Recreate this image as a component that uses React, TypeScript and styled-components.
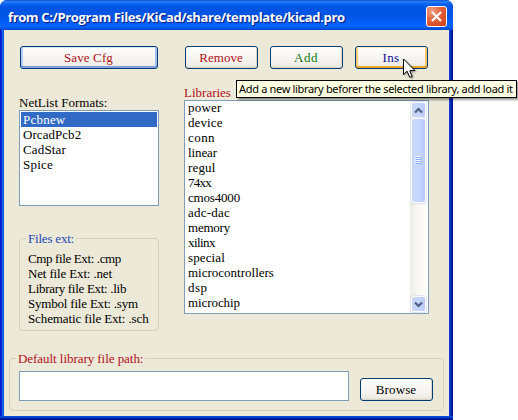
import React from "react";
import styled, { createGlobalStyle } from "styled-components";

const GlobalStyle = createGlobalStyle`
  * { box-sizing: border-box; }
  html, body { margin: 0; padding: 0; background: #fff; }
  body { width: 518px; height: 420px; overflow: hidden; }
`;

const Window = styled.div`
  position: relative;
  display: flex;
  flex-direction: column;
  width: 453px;
  height: 420px;
  border-radius: 7px 7px 0 0;
  background: linear-gradient(90deg, #0019cf 0 1px, #0831d9 1px 2px, #166aee 2px 3px, #0855dd 3px 50%, #0a3fd0 50% calc(100% - 3px), #0831d0 calc(100% - 3px) calc(100% - 2px), #001ea0 calc(100% - 2px) calc(100% - 1px), #00138c calc(100% - 1px));
  font: 13px/15px "Liberation Serif", serif;
  color: #000;
  white-space: pre;
`;

const TitleBar = styled.header`
  display: flex;
  align-items: center;
  justify-content: space-between;
  height: 30px;
  flex: none;
  padding: 3px 6px 0 8px;
  border-radius: 7px 7px 0 0;
  background: linear-gradient(180deg, #0a50cf 0, #2b80f5 6%, #0a62ee 13%, #0054e3 25%, #0055e5 55%, #0261fb 78%, #0264ff 88%, #0257e6 94%, #0041c2 100%);
`;

const Title = styled.h1`
  margin: 0;
  font: bold 13px/20px "Open Sans", sans-serif;
  letter-spacing: -0.375px;
  color: #fff;
  text-shadow: 1px 1px 1px #0a1883;
`;

const CloseButton = styled.button`
  display: flex;
  align-items: center;
  justify-content: center;
  width: 21px;
  height: 21px;
  padding: 0;
  border: 1px solid #fff;
  border-radius: 3px;
  background: radial-gradient(circle at 25% 20%, #f0a088 0, #e4613a 45%, #d03c12 100%);
`;

const Client = styled.main`
  display: flex;
  flex-direction: column;
  width: 445px;
  height: 386px;
  margin-left: 4px;
  padding: 16px 5px 5px;
  background: #ece9d8;
`;

const Frame = styled.div`
  height: 4px;
  width: 453px;
  background: linear-gradient(180deg, #0a4ad8 0 1px, #0840d0 1px 2px, #001ea0 2px 3px, #00138c 3px);
`;

const Columns = styled.div`
  display: grid;
  grid-template-columns: 140px 245px;
  column-gap: 25px;
  height: 312px;
  padding-left: 10px;
`;

const Column = styled.section`
  display: flex;
  flex-direction: column;
`;

const ButtonRow = styled.div`
  display: flex;
  justify-content: space-between;
  height: 23px;
  padding: 0 1px;
`;

const Button = styled.button<{ $tone?: string; $state?: "default" | "hover"; $wide?: boolean; $spacing?: number }>`
  width: ${(p) => (p.$wide ? 138 : 73)}px;
  height: 23px;
  padding: 0 1px 0 0;
  border: 1px solid #003c74;
  border-radius: 3px;
  font: inherit;
  letter-spacing: ${(p) => p.$spacing ?? 0}px;
  color: ${(p) => p.$tone ?? "#000"};
  background: linear-gradient(180deg, #fff 0, #f6f5f1 50%, #efeee8 85%, #dedad0 100%);
  box-shadow: ${(p) =>
    p.$state === "default"
      ? "inset 0 1px #cee7ff, inset 0 -2px #7f9fe0, inset 2px 0 #b3cdf5, inset -2px 0 #a2c0f0"
      : p.$state === "hover"
        ? "inset 0 1px #fff0cf, inset 0 -2px #eba72a, inset 2px 0 #fbcd70, inset -2px 0 #f5c566"
        : "inset -1px -1px #d9d5c9"};
`;

const Label = styled.div<{ $tone?: string; $top: number }>`
  margin-top: ${(p) => p.$top}px;
  height: 15px;
  color: ${(p) => p.$tone ?? "#000"};
`;

const FormatList = styled.ul`
  height: 96px;
  margin: 0;
  padding: 1px;
  list-style: none;
  border: 1px solid #7f9db9;
  background: #fff;
`;

const Item = styled.li<{ $selected?: boolean; $spacing?: number }>`
  height: 15px;
  padding-left: 2px;
  letter-spacing: ${(p) => p.$spacing ?? 0}px;
  color: ${(p) => (p.$selected ? "#fff" : "#000")};
  background: ${(p) => (p.$selected ? "#316ac5" : "transparent")};
`;

const LibraryBox = styled.div`
  display: flex;
  justify-content: space-between;
  height: 214px;
  border: 1px solid #7f9db9;
  background: #fff;
`;

const LibraryList = styled.ul`
  margin: -1px 0 0;
  padding: 0 0 0 1px;
  list-style: none;
`;

const ScrollBar = styled.div`
  display: flex;
  flex-direction: column;
  justify-content: space-between;
  width: 17px;
  height: 210px;
  margin: 1px 1px 0 0;
  background: linear-gradient(90deg, #eeede5 0, #f5f4ee 35%, #fefefb 100%);
`;

const ScrollTop = styled.div`
  display: flex;
  flex-direction: column;
`;

const ScrollPart = styled.div<{ $height: number }>`
  display: flex;
  align-items: center;
  justify-content: center;
  width: 15px;
  height: ${(p) => p.$height}px;
  margin: 0 1px;
  border: 1px solid #fff;
  border-radius: 3px;
  background: linear-gradient(90deg, #c9d7fc 0, #c6d5fd 60%, #b6c8f7 100%);
  box-shadow: 0 0 0 1px #e2e8f4, 0 1px 1px #a9bde0;
`;

const Group = styled.fieldset<{ $top: number; $height: number }>`
  display: flex;
  flex-direction: column;
  min-width: 0;
  height: ${(p) => p.$height}px;
  margin: ${(p) => p.$top}px 0 0;
  padding: 0 8px;
  border: 1px solid #d0d0bf;
  border-radius: 4px;
`;

const Legend = styled.legend<{ $tone: string; $spacing?: number }>`
  height: 15px;
  margin-left: -2px;
  padding: 0 2px;
  letter-spacing: ${(p) => p.$spacing ?? 0}px;
  color: ${(p) => p.$tone};
`;

const ExtList = styled.div`
  padding-top: 5px;
`;

const ExtLine = styled.div<{ $spacing: number }>`
  height: 15px;
  letter-spacing: ${(p) => p.$spacing}px;
`;

const PathRow = styled.div`
  display: flex;
  align-items: flex-end;
  gap: 11px;
  padding: 5px 0 0 1px;
`;

const PathInput = styled.input`
  width: 330px;
  height: 30px;
  padding: 2px 4px;
  border: 1px solid #7f9db9;
  background: #fff;
  font: inherit;
`;

const Tooltip = styled.div`
  position: absolute;
  left: 236px;
  top: 80px;
  width: 281px;
  height: 18px;
  padding-left: 2px;
  border: 1px solid #000;
  background: #ffffe1;
  box-shadow: 2px 2px 2px rgba(0, 0, 0, 0.4);
  font: 11px/15px "Noto Sans", sans-serif;
  letter-spacing: -0.32px;
`;

const Cursor = styled.svg`
  position: absolute;
  left: 403px;
  top: 58px;
  filter: drop-shadow(1px 1px 1px rgba(0, 0, 0, 0.35));
`;

const RED = "#b01018";

const formats: [string, number][] = [
  ["Pcbnew", 0.22],
  ["OrcadPcb2", 0.05],
  ["CadStar", 0.16],
  ["Spice", 0.22],
];

const extensions: [string, number][] = [
  ["Cmp file Ext: .cmp", -0.37],
  ["Net file Ext: .net", -0.15],
  ["Library file Ext: .lib", -0.3],
  ["Symbol file Ext: .sym", -0.2],
  ["Schematic file Ext: .sch", -0.12],
];

const libraries: [string, number][] = [
  ["power", 0.2],
  ["device", 0.1],
  ["conn", 0.43],
  ["linear", -0.1],
  ["regul", 0.16],
  ["74xx", -0.75],
  ["cmos4000", -0.18],
  ["adc-dac", 0.23],
  ["memory", -0.22],
  ["xilinx", -0.56],
  ["special", 0.13],
  ["microcontrollers", 0],
  ["dsp", 0.48],
  ["microchip", -0.08],
];

function Chevron({ down }: { down?: boolean }) {
  return (
    <svg width="9" height="7" viewBox="0 0 9 7">
      <path d={down ? "M1 1.5 4.5 5 8 1.5" : "M1 5.5 4.5 2 8 5.5"} fill="none" stroke="#4d6185" strokeWidth="2.2" />
    </svg>
  );
}

export default function App() {
  return (
    <>
      <GlobalStyle />
      <Window>
        <TitleBar>
          <Title>from C:/Program Files/KiCad/share/template/kicad.pro</Title>
          <CloseButton aria-label="Close">
            <svg width="13" height="13" viewBox="0 0 13 13">
              <path d="M2 2 11 11M11 2 2 11" stroke="#fff" strokeWidth="2.2" />
            </svg>
          </CloseButton>
        </TitleBar>
        <Client>
          <Columns>
            <Column>
              <ButtonRow>
                <Button $wide $tone={RED} $state="default" $spacing={0.12}>Save Cfg</Button>
              </ButtonRow>
              <Label $top={26}>NetList Formats:</Label>
              <FormatList>
                {formats.map(([name, spacing], i) => (
                  <Item key={name} $selected={i === 0} $spacing={spacing}>{name}</Item>
                ))}
              </FormatList>
              <Group $top={25} $height={100}>
                <Legend $tone="#1c48b4" $spacing={-0.2}>Files ext:</Legend>
                <ExtList>
                  {extensions.map(([text, spacing]) => (
                    <ExtLine key={text} $spacing={spacing}>{text}</ExtLine>
                  ))}
                </ExtList>
              </Group>
            </Column>
            <Column>
              <ButtonRow>
                <Button $tone={RED}>Remove</Button>
                <Button $tone="#0a7a12" $spacing={0.54}>Add</Button>
                <Button $tone="#0c0c96" $state="hover" $spacing={0.4}>Ins</Button>
              </ButtonRow>
              <Label $tone={RED} $top={16}>Libraries</Label>
              <LibraryBox>
                <LibraryList>
                  {libraries.map(([name, spacing]) => (
                    <Item key={name} $spacing={spacing}>{name}</Item>
                  ))}
                </LibraryList>
                <ScrollBar>
                  <ScrollTop>
                    <ScrollPart $height={16}><Chevron /></ScrollPart>
                    <ScrollPart $height={85}>
                      <svg width="7" height="9" viewBox="0 0 7 9">
                        <path d="M0 .5H6M0 2.5H6M0 4.5H6M0 6.5H6" stroke="#eef4fe" />
                        <path d="M1 1.5H7M1 3.5H7M1 5.5H7M1 7.5H7" stroke="#8cb0f8" />
                      </svg>
                    </ScrollPart>
                  </ScrollTop>
                  <ScrollPart $height={16}><Chevron down /></ScrollPart>
                </ScrollBar>
              </LibraryBox>
            </Column>
          </Columns>
          <Group $top={-7} $height={60}>
            <Legend $tone={RED} $spacing={-0.05}>Default library file path:</Legend>
            <PathRow>
              <PathInput aria-label="Default library file path" />
              <Button $spacing={0.13}>Browse</Button>
            </PathRow>
          </Group>
        </Client>
        <Frame />
        <Tooltip>Add a new library beforer the selected library, add load it</Tooltip>
        <Cursor width="13" height="20" viewBox="0 0 13 20">
          <path d="M.5 1V16.5L4.1 13.2 6.6 19H9.2L6.8 12.6H12Z" fill="#fff" stroke="#000" strokeWidth="1" />
        </Cursor>
      </Window>
    </>
  );
}
